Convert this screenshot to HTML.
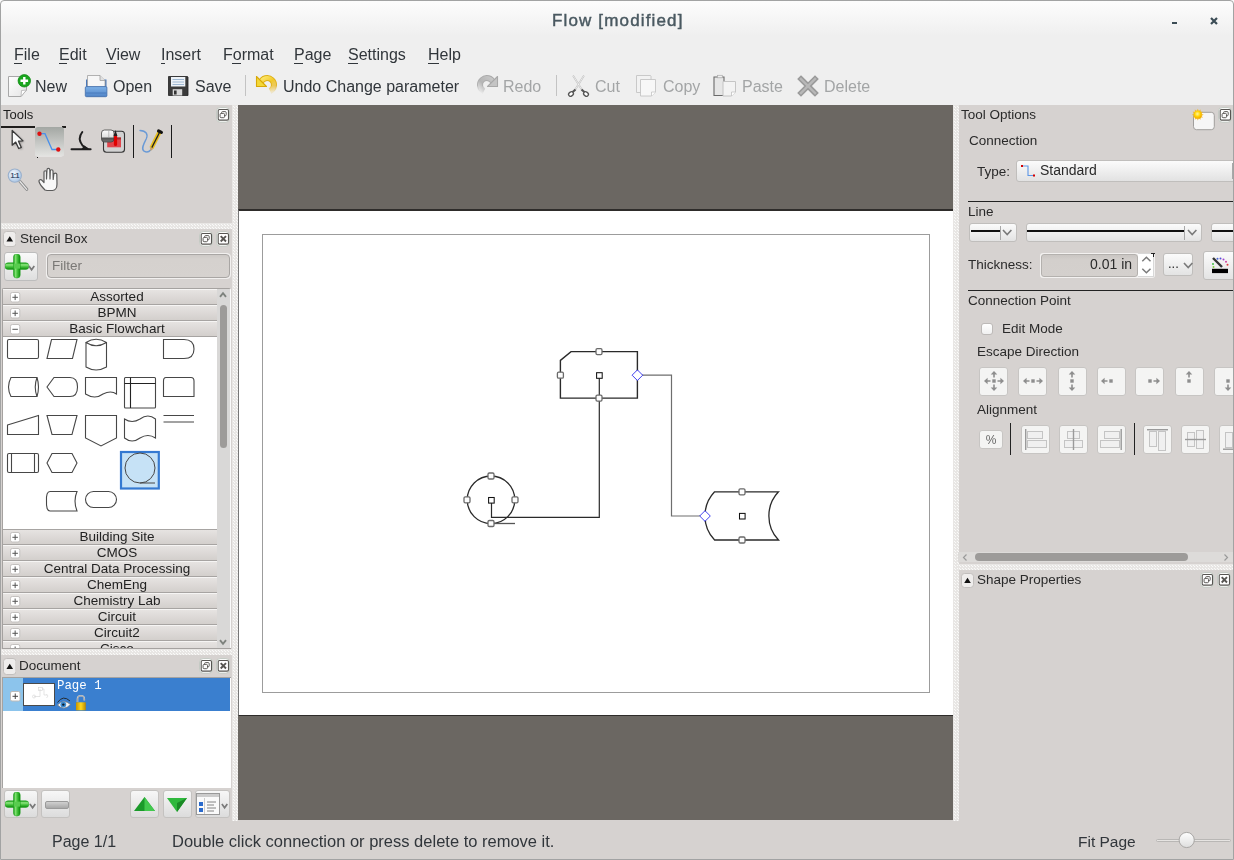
<!DOCTYPE html>
<html><head><meta charset="utf-8"><style>
html,body{margin:0;padding:0;}
body{width:1234px;height:860px;overflow:hidden;position:relative;background:#efefef;font-family:"Liberation Sans",sans-serif;}
body>div,body>svg{position:absolute;}
.t{white-space:pre;line-height:1;will-change:transform;}
</style></head><body>
<div style="left:0px;top:0px;width:1234px;height:40px;background:linear-gradient(#fdfdfd 0px,#f6f6f6 18px,#efefef 36px);"></div>
<div class="t" style="left:551.5px;top:12.00px;font-size:17px;color:#4a5961;letter-spacing:1.15px;-webkit-text-stroke:0.45px #4a5961;">Flow [modified]</div>
<div style="left:1172px;top:22px;width:5px;height:2px;background:#3b4c55;"></div>
<svg style="left:1210px;top:17px" width="8" height="8"><path d="M1 1L7 7M7 1L1 7" stroke="#3b4c55" stroke-width="2.2"/></svg>
<div class="t" style="left:14px;top:47.00px;font-size:16px;color:#31363b;">File</div>
<div style="left:14px;top:63px;width:8px;height:1px;background:#31363b;"></div>
<div class="t" style="left:58.5px;top:47.00px;font-size:16px;color:#31363b;">Edit</div>
<div style="left:58.5px;top:63px;width:8px;height:1px;background:#31363b;"></div>
<div class="t" style="left:105.5px;top:47.00px;font-size:16px;color:#31363b;">View</div>
<div style="left:105.5px;top:63px;width:10px;height:1px;background:#31363b;"></div>
<div class="t" style="left:161px;top:47.00px;font-size:16px;color:#31363b;">Insert</div>
<div style="left:161px;top:63px;width:4px;height:1px;background:#31363b;"></div>
<div class="t" style="left:222.5px;top:47.00px;font-size:16px;color:#31363b;">Format</div>
<div style="left:231.5px;top:63px;width:9px;height:1px;background:#31363b;"></div>
<div class="t" style="left:293.5px;top:47.00px;font-size:16px;color:#31363b;">Page</div>
<div style="left:293.5px;top:63px;width:9px;height:1px;background:#31363b;"></div>
<div class="t" style="left:347.5px;top:47.00px;font-size:16px;color:#31363b;">Settings</div>
<div style="left:347.5px;top:63px;width:10px;height:1px;background:#31363b;"></div>
<div class="t" style="left:427.5px;top:47.00px;font-size:16px;color:#31363b;">Help</div>
<div style="left:427.5px;top:63px;width:11px;height:1px;background:#31363b;"></div>
<div class="t" style="left:35px;top:79.00px;font-size:16px;color:#31363b;">New</div>
<div class="t" style="left:112.5px;top:79.00px;font-size:16px;color:#31363b;">Open</div>
<div class="t" style="left:194.5px;top:79.00px;font-size:16px;color:#31363b;">Save</div>
<div class="t" style="left:283px;top:79.00px;font-size:16px;color:#31363b;">Undo Change parameter</div>
<div class="t" style="left:503px;top:79.00px;font-size:16px;color:#a3a5a6;">Redo</div>
<div class="t" style="left:594.5px;top:79.00px;font-size:16px;color:#a3a5a6;">Cut</div>
<div class="t" style="left:662.5px;top:79.00px;font-size:16px;color:#a3a5a6;">Copy</div>
<div class="t" style="left:741.5px;top:79.00px;font-size:16px;color:#a3a5a6;">Paste</div>
<div class="t" style="left:824px;top:79.00px;font-size:16px;color:#a3a5a6;">Delete</div>
<div style="left:245px;top:75px;width:1px;height:21px;background:#c3c3c3;"></div>
<div style="left:556px;top:75px;width:1px;height:21px;background:#c3c3c3;"></div>
<div style="left:1px;top:105px;width:231px;height:715px;background:#d6d2d0;"></div>
<div style="left:232px;top:105px;width:6px;height:716px;background:#ebe9e7;"></div>
<div style="left:953px;top:105px;width:5px;height:716px;background:#ebe9e7;"></div>
<div style="left:958px;top:105px;width:275px;height:715px;background:#d6d2d0;"></div>
<div style="left:238px;top:105px;width:715px;height:715px;background:#6b6762;"></div>
<div style="left:238px;top:209px;width:715px;height:507px;background:#fff;border-top:2px solid #2e2c2a;border-bottom:1px solid #2e2c2a;border-left:1px solid #777;box-sizing:border-box;"></div>
<div style="left:262px;top:234px;width:668px;height:459px;border:1px solid #9c9c9c;box-sizing:border-box;"></div>
<div style="left:1px;top:820px;width:1232px;height:39px;background:#d6d2d0;"></div>
<div class="t" style="left:52px;top:834.00px;font-size:16px;color:#31363b;">Page 1/1</div>
<div class="t" style="left:172px;top:833.00px;font-size:16.5px;color:#31363b;">Double click connection or press delete to remove it.</div>
<div class="t" style="left:1078px;top:834.00px;font-size:15.5px;color:#31363b;">Fit Page</div>
<div class="t" style="left:3px;top:108.00px;font-size:13px;color:#1e1e1e;">Tools</div>
<svg style="left:216px;top:107px" width="15" height="16" viewBox="0 0 15 16"><rect x="0.6" y="0.6" width="12.8" height="14.6" rx="3.5" fill="#ffffff" stroke="#bcc4bc" stroke-width="0.9"/><rect x="2.2" y="2.5" width="10.3" height="10.6" rx="1.3" fill="none" stroke="#575552" stroke-width="1.1"/><rect x="5.6" y="4.6" width="4.6" height="4.2" rx="1" fill="none" stroke="#575552" stroke-width="0.95"/><rect x="4.1" y="6.4" width="4.4" height="4.3" rx="1" fill="#fafafa" stroke="#575552" stroke-width="0.95"/></svg>
<div style="left:1px;top:126px;width:34px;height:1.6px;background:#1f1d1c;"></div>
<div style="left:62px;top:126px;width:4px;height:1.6px;background:#1f1d1c;"></div>
<div style="left:34.5px;top:126.5px;width:29px;height:29.5px;border-radius:3px;background:linear-gradient(#a3a7a3,#e3e3e1);box-shadow:0 0.5px 0 #f2f2f2;"></div>
<div style="left:37px;top:157px;width:1.3px;height:1.3px;background:#111;"></div>
<svg style="left:8px;top:127px" width="20" height="26"><defs><filter id="blr" x="-50%" y="-50%" width="200%" height="200%"><feGaussianBlur stdDeviation="1"/></filter></defs><path d="M5.5 4.5L5.5 19.2L9 16.1L12 22.5L14.6 21.4L11.8 15.2L16.3 14.9Z" fill="#000" opacity="0.35" filter="url(#blr)"/><path d="M4.2 3.5L4.2 18.2L7.7 15.1L10.7 21.5L13.3 20.4L10.5 14.2L15 13.9Z" fill="#fafafa" stroke="#3a3a3a" stroke-width="1.3" stroke-linejoin="round"/></svg>
<svg style="left:35px;top:128px" width="28" height="26"><path d="M4.5 5.7L10 5.7L17 21.5L23.3 21.5" fill="none" stroke="#4a90ea" stroke-width="1.3"/><circle cx="4.5" cy="5.7" r="2.2" fill="#e01010"/><circle cx="23.3" cy="21.5" r="2.2" fill="#e01010"/></svg>
<svg style="left:66px;top:124px" width="30" height="30" viewBox="66 124 30 30"><path d="M82.3 132C79.5 135.5 78.6 140.5 82.5 145.5L87 148.5" fill="none" stroke="#1e1e1e" stroke-width="2" stroke-linecap="round"/><path d="M71.5 149.2L90.6 149.2" stroke="#1e1e1e" stroke-width="2" stroke-linecap="round"/><path d="M81 150L84 145.5L91 150Z" fill="#1e1e1e"/></svg>
<svg style="left:98px;top:126px" width="30" height="30" viewBox="98 126 30 30"><defs><linearGradient id="cyl" x1="0" y1="0" x2="0" y2="1"><stop offset="0" stop-color="#fdfdfd"/><stop offset="0.55" stop-color="#e2e2e2"/><stop offset="0.7" stop-color="#555"/><stop offset="1" stop-color="#777"/></linearGradient></defs><rect x="103.5" y="131.2" width="21" height="21" rx="3" fill="#d2d2d2" stroke="#333" stroke-width="1.1"/><rect x="107.2" y="137.5" width="13.8" height="9.8" fill="#e0454c"/><path d="M107.2 137.5L121 137.5L121 139.5L107.2 139.5Z" fill="#a03030"/><rect x="101.5" y="130" width="12.5" height="12" rx="3" fill="url(#cyl)" stroke="#444" stroke-width="0.8"/><path d="M108.8 130.5L108.8 137" stroke="#999" stroke-width="0.6"/><path d="M115.5 135L115.5 144.5" stroke="#e00000" stroke-width="3.2" stroke-linecap="round"/><path d="M113.6 136L115.5 130L117.4 136Z" fill="#222"/></svg>
<div style="left:133px;top:125px;width:1.2px;height:32.5px;background:#1a1a1a;"></div>
<svg style="left:136px;top:124px" width="32" height="32" viewBox="136 124 32 32"><path d="M140 130.5C146 130.8 148.5 134 146.2 139C143.6 144 140.8 149 144 151.2C146.5 152.6 149 152 150.6 150" fill="none" stroke="#6a9ad6" stroke-width="1.35" stroke-linecap="round"/><path d="M151.5 148L159.7 131.8" stroke="#e8c020" stroke-width="4.4"/><path d="M151.8 147.6L159.6 132.2" stroke="#222" stroke-width="1.3"/><path d="M158.6 131L161.4 132.4" stroke="#111" stroke-width="3.2" stroke-linecap="round"/><path d="M149.8 147L153.4 148.8L150.6 151Z" fill="#c8a060"/></svg>
<div style="left:171px;top:125px;width:1.2px;height:32.5px;background:#1a1a1a;"></div>
<svg style="left:0px;top:160px" width="64" height="36" viewBox="0 160 64 36"><defs><radialGradient id="lens" cx="0.4" cy="0.35" r="0.7"><stop offset="0" stop-color="#f4f8fc"/><stop offset="1" stop-color="#a8c4e4"/></radialGradient></defs><path d="M20 181.5L26.8 189.3" stroke="#8a8a8a" stroke-width="3" stroke-linecap="round"/><path d="M20 181.5L26.8 189.3" stroke="#e8e8e8" stroke-width="1.2" stroke-linecap="round"/><circle cx="14.8" cy="175.6" r="6.6" fill="url(#lens)" stroke="#9ab0cc" stroke-width="1.1"/><text x="14.6" y="178.3" font-size="7.2" font-weight="bold" text-anchor="middle" fill="#3a4e6e" font-family="Liberation Sans" letter-spacing="-0.7">1:1</text><path d="M45 190C42 187 39.5 183.5 39 181.5C38.6 179.8 40.6 179 42 180.3L44 182.5L44 172C44 170.3 46.5 170.3 46.5 172L46.5 179L47 169.8C47 168 49.8 168 49.8 169.8L50 179L50.3 171C50.3 169.3 53 169.3 53 171L53.2 179.5L53.8 174.3C53.8 172.8 56.8 172.8 56.8 174.3L57 184C57 188 55 190.5 52.5 190.5L47 190.5Z" fill="#f8f8f8" stroke="#5a5a5a" stroke-width="1.2" stroke-linejoin="round"/></svg>
<div style="left:1px;top:223px;width:231px;height:6px;background-color:#e8e6e4;background-image:radial-gradient(circle,#fafaf9 0.7px,transparent 0.75px),radial-gradient(circle,#fafaf9 0.7px,transparent 0.75px);background-size:3px 3px;background-position:0 0,1px 1px;"></div>
<svg style="left:2.5px;top:230.5px" width="13.5" height="16"><rect x="0.5" y="0.5" width="12.5" height="15" rx="3" fill="#efedec" stroke="#c2bfbd"/><path d="M3.45 10.5L6.75 5.2L10.05 10.5Z" fill="#111"/></svg>
<div class="t" style="left:19.5px;top:232.00px;font-size:13.5px;color:#2a2a2a;">Stencil Box</div>
<svg style="left:199px;top:231px" width="15" height="16" viewBox="0 0 15 16"><rect x="0.6" y="0.6" width="12.8" height="14.6" rx="3.5" fill="#ffffff" stroke="#bcc4bc" stroke-width="0.9"/><rect x="2.2" y="2.5" width="10.3" height="10.6" rx="1.3" fill="none" stroke="#575552" stroke-width="1.1"/><rect x="5.6" y="4.6" width="4.6" height="4.2" rx="1" fill="none" stroke="#575552" stroke-width="0.95"/><rect x="4.1" y="6.4" width="4.4" height="4.3" rx="1" fill="#fafafa" stroke="#575552" stroke-width="0.95"/></svg>
<svg style="left:216px;top:231px" width="15" height="16" viewBox="0 0 15 16"><rect x="0.6" y="0.6" width="12.8" height="14.6" rx="3.5" fill="#ffffff" stroke="#bcc4bc" stroke-width="0.9"/><rect x="2.2" y="2.5" width="10.3" height="10.6" rx="1.3" fill="none" stroke="#575552" stroke-width="1.1"/><path d="M4.7 5.1L10 10.5M10 5.1L4.7 10.5" stroke="#575552" stroke-width="1.9"/></svg>
<div style="left:3.6px;top:251.5px;width:34.6px;height:29.2px;box-sizing:border-box;border:1px solid #bdbdbd;border-radius:3px;background:linear-gradient(#fafafa,#dedede);"></div>
<svg style="left:5px;top:254px" width="25" height="25" viewBox="0 0 25 25"><defs><linearGradient id="gv1" x1="0" y1="0" x2="1" y2="0"><stop offset="0" stop-color="#109a10"/><stop offset="0.3" stop-color="#7fe070"/><stop offset="0.6" stop-color="#40bf38"/><stop offset="1" stop-color="#0a8a0a"/></linearGradient><linearGradient id="gh1" x1="0" y1="0" x2="0" y2="1"><stop offset="0" stop-color="#109a10"/><stop offset="0.3" stop-color="#8fe680"/><stop offset="0.6" stop-color="#46c23e"/><stop offset="1" stop-color="#0a8a0a"/></linearGradient></defs><rect x="0" y="8.8" width="23.8" height="6.6" rx="3" fill="url(#gh1)" stroke="#1e9e1e" stroke-width="0.5"/><rect x="8.5" y="0" width="6.7" height="24" rx="3" fill="url(#gv1)" stroke="#1e9e1e" stroke-width="0.5"/><rect x="8.7" y="9.6" width="6.3" height="5" fill="#58cc4e"/></svg>
<svg style="left:28.2px;top:265px" width="9" height="8"><path d="M0.9 1L3.6 4.8L6.3 1" fill="none" stroke="#7a7a7a" stroke-width="1.7"/></svg>
<div style="left:46px;top:253px;width:184.5px;height:25.5px;box-sizing:border-box;border:1px solid #f2f0ef;border-radius:4px;background:#f2f0ef;"></div>
<div style="left:47px;top:254px;width:183px;height:23.5px;box-sizing:border-box;border:1px solid #a9a6a4;border-radius:4px;background:linear-gradient(#cdc9c6,#d5d1ce 4px,#d6d2cf);"></div>
<div class="t" style="left:51.5px;top:259.00px;font-size:13.5px;color:#7a7876;">Filter</div>
<div style="left:2px;top:288px;width:229px;height:361px;box-sizing:border-box;border:1px solid #a5a2a0;border-right-color:#fbfbfb;border-radius:2px 2px 0 0;background:#fff;"></div>
<div style="left:217px;top:289px;width:13px;height:359px;background:#d9d8d7;"></div>
<svg style="left:217px;top:291px" width="12" height="8"><path d="M3 5.8L6 2.2L9 5.8" fill="none" stroke="#7d827d" stroke-width="1.9"/></svg>
<svg style="left:217px;top:638px" width="12" height="8"><path d="M3 2.2L6 5.8L9 2.2" fill="none" stroke="#7d827d" stroke-width="1.9"/></svg>
<div style="left:219.5px;top:304.5px;width:7.5px;height:143px;border-radius:4px;background:#9d9b99;"></div>
<div style="left:3px;top:289px;width:214px;height:16px;box-sizing:border-box;border-top:1px solid #f6f5f4;border-bottom:1px solid #a7a4a2;background:linear-gradient(#e6e3e1,#d3cfcc);"></div>
<svg style="left:9.5px;top:292.2px" width="11" height="11"><rect x="0.5" y="0.5" width="9.3" height="9.5" rx="1.8" fill="#fff" stroke="#c4c1bf"/><path d="M2.4 5.3L7.9 5.3M5.15 2.5L5.15 8.1" stroke="#555" stroke-width="1"/></svg>
<div class="t" style="left:3.5px;top:290.00px;font-size:13.5px;color:#222;width:226px;text-align:center;">Assorted</div>
<div style="left:3px;top:305px;width:214px;height:16px;box-sizing:border-box;border-top:1px solid #f6f5f4;border-bottom:1px solid #a7a4a2;background:linear-gradient(#e6e3e1,#d3cfcc);"></div>
<svg style="left:9.5px;top:308.2px" width="11" height="11"><rect x="0.5" y="0.5" width="9.3" height="9.5" rx="1.8" fill="#fff" stroke="#c4c1bf"/><path d="M2.4 5.3L7.9 5.3M5.15 2.5L5.15 8.1" stroke="#555" stroke-width="1"/></svg>
<div class="t" style="left:3.5px;top:306.00px;font-size:13.5px;color:#222;width:226px;text-align:center;">BPMN</div>
<div style="left:3px;top:321px;width:214px;height:16px;box-sizing:border-box;border-top:1px solid #f6f5f4;border-bottom:1px solid #a7a4a2;background:linear-gradient(#e6e3e1,#d3cfcc);"></div>
<svg style="left:9.5px;top:324.2px" width="11" height="11"><rect x="0.5" y="0.5" width="9.3" height="9.5" rx="1.8" fill="#fff" stroke="#c4c1bf"/><path d="M2.4 5.3L7.9 5.3" stroke="#555" stroke-width="1"/></svg>
<div class="t" style="left:3.5px;top:322.00px;font-size:13.5px;color:#222;width:226px;text-align:center;">Basic Flowchart</div>
<div style="left:3px;top:529px;width:214px;height:16px;box-sizing:border-box;border-top:1px solid #f6f5f4;border-bottom:1px solid #a7a4a2;background:linear-gradient(#e6e3e1,#d3cfcc);"></div>
<svg style="left:9.5px;top:532.2px" width="11" height="11"><rect x="0.5" y="0.5" width="9.3" height="9.5" rx="1.8" fill="#fff" stroke="#c4c1bf"/><path d="M2.4 5.3L7.9 5.3M5.15 2.5L5.15 8.1" stroke="#555" stroke-width="1"/></svg>
<div class="t" style="left:3.5px;top:530.00px;font-size:13.5px;color:#222;width:226px;text-align:center;">Building Site</div>
<div style="left:3px;top:545px;width:214px;height:16px;box-sizing:border-box;border-top:1px solid #f6f5f4;border-bottom:1px solid #a7a4a2;background:linear-gradient(#e6e3e1,#d3cfcc);"></div>
<svg style="left:9.5px;top:548.2px" width="11" height="11"><rect x="0.5" y="0.5" width="9.3" height="9.5" rx="1.8" fill="#fff" stroke="#c4c1bf"/><path d="M2.4 5.3L7.9 5.3M5.15 2.5L5.15 8.1" stroke="#555" stroke-width="1"/></svg>
<div class="t" style="left:3.5px;top:546.00px;font-size:13.5px;color:#222;width:226px;text-align:center;">CMOS</div>
<div style="left:3px;top:561px;width:214px;height:16px;box-sizing:border-box;border-top:1px solid #f6f5f4;border-bottom:1px solid #a7a4a2;background:linear-gradient(#e6e3e1,#d3cfcc);"></div>
<svg style="left:9.5px;top:564.2px" width="11" height="11"><rect x="0.5" y="0.5" width="9.3" height="9.5" rx="1.8" fill="#fff" stroke="#c4c1bf"/><path d="M2.4 5.3L7.9 5.3M5.15 2.5L5.15 8.1" stroke="#555" stroke-width="1"/></svg>
<div class="t" style="left:3.5px;top:562.00px;font-size:13.5px;color:#222;width:226px;text-align:center;">Central Data Processing</div>
<div style="left:3px;top:577px;width:214px;height:16px;box-sizing:border-box;border-top:1px solid #f6f5f4;border-bottom:1px solid #a7a4a2;background:linear-gradient(#e6e3e1,#d3cfcc);"></div>
<svg style="left:9.5px;top:580.2px" width="11" height="11"><rect x="0.5" y="0.5" width="9.3" height="9.5" rx="1.8" fill="#fff" stroke="#c4c1bf"/><path d="M2.4 5.3L7.9 5.3M5.15 2.5L5.15 8.1" stroke="#555" stroke-width="1"/></svg>
<div class="t" style="left:3.5px;top:578.00px;font-size:13.5px;color:#222;width:226px;text-align:center;">ChemEng</div>
<div style="left:3px;top:593px;width:214px;height:16px;box-sizing:border-box;border-top:1px solid #f6f5f4;border-bottom:1px solid #a7a4a2;background:linear-gradient(#e6e3e1,#d3cfcc);"></div>
<svg style="left:9.5px;top:596.2px" width="11" height="11"><rect x="0.5" y="0.5" width="9.3" height="9.5" rx="1.8" fill="#fff" stroke="#c4c1bf"/><path d="M2.4 5.3L7.9 5.3M5.15 2.5L5.15 8.1" stroke="#555" stroke-width="1"/></svg>
<div class="t" style="left:3.5px;top:594.00px;font-size:13.5px;color:#222;width:226px;text-align:center;">Chemistry Lab</div>
<div style="left:3px;top:609px;width:214px;height:16px;box-sizing:border-box;border-top:1px solid #f6f5f4;border-bottom:1px solid #a7a4a2;background:linear-gradient(#e6e3e1,#d3cfcc);"></div>
<svg style="left:9.5px;top:612.2px" width="11" height="11"><rect x="0.5" y="0.5" width="9.3" height="9.5" rx="1.8" fill="#fff" stroke="#c4c1bf"/><path d="M2.4 5.3L7.9 5.3M5.15 2.5L5.15 8.1" stroke="#555" stroke-width="1"/></svg>
<div class="t" style="left:3.5px;top:610.00px;font-size:13.5px;color:#222;width:226px;text-align:center;">Circuit</div>
<div style="left:3px;top:625px;width:214px;height:16px;box-sizing:border-box;border-top:1px solid #f6f5f4;border-bottom:1px solid #a7a4a2;background:linear-gradient(#e6e3e1,#d3cfcc);"></div>
<svg style="left:9.5px;top:628.2px" width="11" height="11"><rect x="0.5" y="0.5" width="9.3" height="9.5" rx="1.8" fill="#fff" stroke="#c4c1bf"/><path d="M2.4 5.3L7.9 5.3M5.15 2.5L5.15 8.1" stroke="#555" stroke-width="1"/></svg>
<div class="t" style="left:3.5px;top:626.00px;font-size:13.5px;color:#222;width:226px;text-align:center;">Circuit2</div>
<div style="left:3px;top:641px;width:214px;height:16px;box-sizing:border-box;border-top:1px solid #f6f5f4;border-bottom:1px solid #a7a4a2;background:linear-gradient(#e6e3e1,#d3cfcc);"></div>
<svg style="left:9.5px;top:644.2px" width="11" height="11"><rect x="0.5" y="0.5" width="9.3" height="9.5" rx="1.8" fill="#fff" stroke="#c4c1bf"/><path d="M2.4 5.3L7.9 5.3M5.15 2.5L5.15 8.1" stroke="#555" stroke-width="1"/></svg>
<div class="t" style="left:3.5px;top:642.00px;font-size:13.5px;color:#222;width:226px;text-align:center;">Cisco</div>
<div style="left:3px;top:529px;width:214px;height:1px;background:#a7a4a2;"></div>
<div style="left:1px;top:649px;width:232px;height:40px;background:#d6d2d0;"></div>
<div style="left:2px;top:648px;width:229px;height:1px;background:#a5a2a0;"></div>
<svg style="left:3px;top:337px" width="214" height="192" viewBox="3 337 214 192"><g fill="none" stroke="#474747" stroke-width="1.1"><rect x="7.5" y="339.5" width="31" height="19" rx="1.5"/><path d="M51.5 339.5L77 339.5L72.5 358.5L47 358.5Z"/><path d="M86 342.5L86 367Q96 373 106.5 367L106.5 342.5Q96 336 86 342.5Q96 349 106.5 342.5"/><path d="M163.5 339.5L184 339.5Q194 339.5 194 349Q194 358.5 184 358.5L163.5 358.5Z"/><path d="M11 377.5L37 377.5Q40 387 37 396.5L11 396.5Q6 387 11 377.5Z"/><path d="M37 377.5Q33.5 387 37 396.5"/><path d="M54 377.5L70 377.5Q77.5 377.5 77.5 387Q77.5 396.5 70 396.5L54 396.5L47 387Z"/><path d="M85.5 377.5L116.5 377.5L116.5 394Q111 390 103 394Q95 400 85.5 394Z"/><rect x="124.5" y="377.5" width="31" height="30.5" rx="1"/><path d="M124.5 383.5L155.5 383.5M130.5 377.5L130.5 408" stroke="#222"/><path d="M166 377.5L191 377.5Q194 377.5 194 381L194 396.5L163.5 396.5L163.5 381Q163.5 377.5 166 377.5Z"/><path d="M7.5 425L38.5 415.5L38.5 434.5L7.5 434.5Z"/><path d="M47 415.5L77 415.5L72 434.5L52 434.5Z"/><path d="M85.5 415.5L116.5 415.5L116.5 438L101 446L85.5 438Z"/><path d="M124.5 419Q132 424 140 419Q148 413 155.5 419L155.5 438Q148 433 140 438Q132 444 124.5 438Z"/><path d="M163.5 415.5L194 415.5M163.5 422L194 422"/><rect x="7.5" y="453.5" width="31" height="19" rx="1.5"/><path d="M11.5 453.5L11.5 472.5M34.5 453.5L34.5 472.5"/><path d="M52 453.5L72 453.5L77 463L72 472.5L52 472.5L47 463Z"/><path d="M50 491.5L77 491.5Q73 501 77 511L50 511Q46 511 46.5 501Q46 491.5 50 491.5Z"/><rect x="85.5" y="491.5" width="31" height="16" rx="8"/></g><rect x="121" y="452" width="37.8" height="36.5" fill="#c6e2f6" stroke="#3479d1" stroke-width="2.2"/><circle cx="140" cy="468" r="15" fill="none" stroke="#474747" stroke-width="1"/><path d="M140 483L155 483" stroke="#474747" stroke-width="1"/></svg>
<div style="left:1px;top:649px;width:231px;height:6px;background-color:#e8e6e4;background-image:radial-gradient(circle,#fafaf9 0.7px,transparent 0.75px),radial-gradient(circle,#fafaf9 0.7px,transparent 0.75px);background-size:3px 3px;background-position:0 0,1px 1px;"></div>
<svg style="left:2.5px;top:657.5px" width="13.5" height="17"><rect x="0.5" y="0.5" width="12.5" height="16" rx="3" fill="#efedec" stroke="#c2bfbd"/><path d="M3.45 11.0L6.75 5.7L10.05 11.0Z" fill="#111"/></svg>
<div class="t" style="left:19.3px;top:659.00px;font-size:13.5px;color:#2a2a2a;">Document</div>
<svg style="left:199px;top:658px" width="15" height="16" viewBox="0 0 15 16"><rect x="0.6" y="0.6" width="12.8" height="14.6" rx="3.5" fill="#ffffff" stroke="#bcc4bc" stroke-width="0.9"/><rect x="2.2" y="2.5" width="10.3" height="10.6" rx="1.3" fill="none" stroke="#575552" stroke-width="1.1"/><rect x="5.6" y="4.6" width="4.6" height="4.2" rx="1" fill="none" stroke="#575552" stroke-width="0.95"/><rect x="4.1" y="6.4" width="4.4" height="4.3" rx="1" fill="#fafafa" stroke="#575552" stroke-width="0.95"/></svg>
<svg style="left:216px;top:658px" width="15" height="16" viewBox="0 0 15 16"><rect x="0.6" y="0.6" width="12.8" height="14.6" rx="3.5" fill="#ffffff" stroke="#bcc4bc" stroke-width="0.9"/><rect x="2.2" y="2.5" width="10.3" height="10.6" rx="1.3" fill="none" stroke="#575552" stroke-width="1.1"/><path d="M4.7 5.1L10 10.5M10 5.1L4.7 10.5" stroke="#575552" stroke-width="1.9"/></svg>
<div style="left:2px;top:677px;width:229px;height:111px;background:#fff;border-left:1px solid #a5a3a1;border-top:1px solid #a5a3a1;box-sizing:border-box;"></div>
<div style="left:2.7px;top:677.6px;width:20px;height:33px;background:#8cc4ec;"></div>
<div style="left:22.7px;top:677.6px;width:207.5px;height:33px;background:#3a7fcf;"></div>
<svg style="left:10px;top:691px" width="11" height="11"><rect x="0.5" y="0.5" width="9.5" height="9.5" rx="1.5" fill="#fff" stroke="#bdbab8"/><path d="M2.5 5.3L8 5.3M5.25 2.5L5.25 8" stroke="#444" stroke-width="1"/></svg>
<div style="left:23.4px;top:683px;width:32px;height:23px;box-sizing:border-box;background:#fff;border:1px solid #4a4a4a;"></div>
<svg style="left:24px;top:684px" width="30" height="21"><path d="M10 12.5L16 12.5L16 5M18 5L20 5L20 11L23 11" fill="none" stroke="#d4d4d4" stroke-width="0.6"/><rect x="14.5" y="3.5" width="4" height="3" fill="none" stroke="#d4d4d4" stroke-width="0.6"/><circle cx="10" cy="12.5" r="1.5" fill="none" stroke="#d4d4d4" stroke-width="0.6"/><path d="M22.5 10Q25.5 12 22.5 14" fill="none" stroke="#d4d4d4" stroke-width="0.6"/></svg>
<div class="t" style="left:57.4px;top:680.00px;font-size:12.4px;color:#fff;font-family:'Liberation Mono',monospace;">Page 1</div>
<svg style="left:56px;top:695px" width="17" height="16" viewBox="56 695 17 16"><path d="M57.5 702.5Q63 694.5 70 701" fill="none" stroke="#222" stroke-width="0.9"/><path d="M57.5 705Q63.5 698.5 70.5 704.5Q64 711.5 57.5 705Z" fill="#f4f6f8" stroke="#777" stroke-width="0.7"/><circle cx="63.3" cy="704.6" r="2.9" fill="#3a8ad0"/><circle cx="63.3" cy="704.6" r="1.2" fill="#0a1a2a"/></svg>
<svg style="left:74px;top:694px" width="14" height="17" viewBox="74 694 14 17"><defs><linearGradient id="gold" x1="0" y1="0" x2="1" y2="0"><stop offset="0" stop-color="#c89400"/><stop offset="0.5" stop-color="#ffd820"/><stop offset="1" stop-color="#b88800"/></linearGradient></defs><path d="M77.5 702L77.5 699Q77.5 695.8 80.9 695.8Q84.3 695.8 84.3 699L84.3 700.5" fill="none" stroke="#d8d8d8" stroke-width="1.6"/><path d="M77.5 702L77.5 699Q77.5 695.8 80.9 695.8Q84.3 695.8 84.3 699L84.3 700.5" fill="none" stroke="#777" stroke-width="0.5"/><rect x="76" y="702.3" width="9.8" height="8" fill="url(#gold)"/></svg>
<div style="left:3.9px;top:789.8px;width:34.4px;height:28.6px;box-sizing:border-box;border:1px solid #c4c2c0;border-radius:3px;background:linear-gradient(#f7f7f7,#dcdcdc);"></div>
<svg style="left:5px;top:792px" width="25" height="25" viewBox="0 0 25 25"><defs><linearGradient id="gv2" x1="0" y1="0" x2="1" y2="0"><stop offset="0" stop-color="#109a10"/><stop offset="0.3" stop-color="#7fe070"/><stop offset="0.6" stop-color="#40bf38"/><stop offset="1" stop-color="#0a8a0a"/></linearGradient><linearGradient id="gh2" x1="0" y1="0" x2="0" y2="1"><stop offset="0" stop-color="#109a10"/><stop offset="0.3" stop-color="#8fe680"/><stop offset="0.6" stop-color="#46c23e"/><stop offset="1" stop-color="#0a8a0a"/></linearGradient></defs><rect x="0" y="8.8" width="23.8" height="6.6" rx="3" fill="url(#gh2)" stroke="#1e9e1e" stroke-width="0.5"/><rect x="8.5" y="0" width="6.7" height="24" rx="3" fill="url(#gv2)" stroke="#1e9e1e" stroke-width="0.5"/><rect x="8.7" y="9.6" width="6.3" height="5" fill="#58cc4e"/></svg>
<svg style="left:28.5px;top:803px" width="9" height="8"><path d="M0.9 1L3.6 4.8L6.3 1" fill="none" stroke="#7a7a7a" stroke-width="1.7"/></svg>
<div style="left:41.4px;top:789.8px;width:29px;height:28.6px;box-sizing:border-box;border:1px solid #c4c2c0;border-radius:3px;background:linear-gradient(#f7f7f7,#dcdcdc);"></div>
<div style="left:45px;top:801px;width:21.5px;height:6px;border-radius:2px;background:linear-gradient(#d0d0d0,#a8a8a8);border:0.5px solid #9a9a9a;"></div>
<div style="left:130.4px;top:789.8px;width:29px;height:28.6px;box-sizing:border-box;border:1px solid #c4c2c0;border-radius:3px;background:linear-gradient(#f7f7f7,#dcdcdc);"></div>
<svg style="left:133px;top:795px" width="23" height="18"><path d="M1 16L11.5 2L22 16Z" fill="#1a9a2a"/><path d="M11.5 2L22 16L11.5 16Z" fill="#42c94e"/></svg>
<div style="left:162.5px;top:789.8px;width:29px;height:28.6px;box-sizing:border-box;border:1px solid #c4c2c0;border-radius:3px;background:linear-gradient(#f7f7f7,#dcdcdc);"></div>
<svg style="left:166px;top:797px" width="22" height="17"><path d="M1 1L21 1L11 15Z" fill="#2fb83d"/><path d="M11 15L21 1L11 6Z" fill="#1a8a26"/></svg>
<div style="left:194.5px;top:789.8px;width:35px;height:28.6px;box-sizing:border-box;border:1px solid #c4c2c0;border-radius:3px;background:linear-gradient(#f7f7f7,#dcdcdc);"></div>
<svg style="left:196px;top:793px" width="25" height="23"><rect x="0.5" y="0.5" width="23" height="21" fill="#fafafa" stroke="#999"/><rect x="1" y="1" width="22" height="3" fill="#ccc"/><rect x="3" y="9" width="4" height="4" fill="#2a6acc"/><rect x="3" y="15" width="4" height="4" fill="#2a6acc"/><path d="M11 9L20 9M11 12L18 12M11 15L20 15M11 18L18 18" stroke="#777" stroke-width="0.9"/><path d="M8.5 5L8.5 21" stroke="#ccc"/></svg>
<svg style="left:221px;top:803px" width="9" height="8"><path d="M0.9 1L3.6 4.8L6.3 1" fill="none" stroke="#7a7a7a" stroke-width="1.7"/></svg>
<div style="left:232px;top:105px;width:6px;height:716px;background-color:#e8e6e4;background-image:radial-gradient(circle,#fafaf9 0.7px,transparent 0.75px),radial-gradient(circle,#fafaf9 0.7px,transparent 0.75px);background-size:3px 3px;background-position:0 0,1px 1px;"></div>
<div style="left:953px;top:105px;width:5.5px;height:716px;background-color:#e8e6e4;background-image:radial-gradient(circle,#fafaf9 0.7px,transparent 0.75px),radial-gradient(circle,#fafaf9 0.7px,transparent 0.75px);background-size:3px 3px;background-position:0 0,1px 1px;"></div>
<div class="t" style="left:961.4px;top:108.00px;font-size:13.5px;color:#2a2a2a;">Tool Options</div>
<svg style="left:1191px;top:108px" width="24" height="23"><defs><radialGradient id="sun" cx="0.45" cy="0.4" r="0.6"><stop offset="0" stop-color="#fff6a0"/><stop offset="0.6" stop-color="#ffd200"/><stop offset="1" stop-color="#f0a800"/></radialGradient></defs><rect x="2.5" y="4.3" width="20.8" height="17.4" rx="3" fill="#f6f6f6" stroke="#a09e9c" stroke-width="1"/><polygon points="12.70,6.70 10.66,7.74 11.91,9.65 9.63,9.53 9.75,11.81 7.84,10.56 6.80,12.60 5.76,10.56 3.85,11.81 3.97,9.53 1.69,9.65 2.94,7.74 0.90,6.70 2.94,5.66 1.69,3.75 3.97,3.87 3.85,1.59 5.76,2.84 6.80,0.80 7.84,2.84 9.75,1.59 9.63,3.87 11.91,3.75 10.66,5.66" fill="#f5b820" opacity="0.85"/><circle cx="6.8" cy="6.7" r="3.9" fill="url(#sun)"/></svg>
<svg style="left:1217.5px;top:107px" width="15" height="16" viewBox="0 0 15 16"><rect x="0.6" y="0.6" width="12.8" height="14.6" rx="3.5" fill="#ffffff" stroke="#bcc4bc" stroke-width="0.9"/><rect x="2.2" y="2.5" width="10.3" height="10.6" rx="1.3" fill="none" stroke="#575552" stroke-width="1.1"/><rect x="5.6" y="4.6" width="4.6" height="4.2" rx="1" fill="none" stroke="#575552" stroke-width="0.95"/><rect x="4.1" y="6.4" width="4.4" height="4.3" rx="1" fill="#fafafa" stroke="#575552" stroke-width="0.95"/></svg>
<div class="t" style="left:968.6px;top:134.00px;font-size:13.5px;color:#2a2a2a;">Connection</div>
<div class="t" style="left:977.4px;top:165.00px;font-size:13.5px;color:#2a2a2a;">Type:</div>
<div style="left:1015.6px;top:160.4px;width:230px;height:22px;box-sizing:border-box;border:1px solid #c0bebc;border-radius:3px;background:linear-gradient(#fbfbfb,#e2e2e2);"></div>
<div style="left:1231.5px;top:163px;width:1px;height:16px;background:#a8a8a8;"></div>
<svg style="left:1019px;top:163px" width="18" height="15"><path d="M3 3L9 3L9 12.5L15 12.5" fill="none" stroke="#5d96e6" stroke-width="1.1"/><rect x="2" y="2" width="2" height="2" fill="#d40000"/><rect x="14" y="11.5" width="2" height="2" fill="#d40000"/></svg>
<div class="t" style="left:1039.5px;top:163.00px;font-size:14px;color:#2a2a2a;">Standard</div>
<div style="left:968px;top:200.5px;width:266px;height:1.5px;background:#222;"></div>
<div class="t" style="left:968px;top:205.00px;font-size:13.5px;color:#2a2a2a;">Line</div>
<div style="left:969px;top:222.7px;width:47.7px;height:19.3px;box-sizing:border-box;border:1px solid #c0bebc;border-radius:3px;background:linear-gradient(#fbfbfb,#e3e3e3);"></div>
<div style="left:970.5px;top:230.3px;width:29px;height:2px;background:#111;"></div>
<div style="left:999.5px;top:225.5px;width:1px;height:14px;background:#a8a8a8;"></div>
<svg style="left:1002px;top:228.8px" width="12" height="8"><path d="M1 1L5.2 5.6L9.4 1" fill="none" stroke="#7a7a7a" stroke-width="1.6"/></svg>
<div style="left:1025.5px;top:222.7px;width:176.3px;height:19.3px;box-sizing:border-box;border:1px solid #c0bebc;border-radius:3px;background:linear-gradient(#fbfbfb,#e3e3e3);"></div>
<div style="left:1027px;top:230.3px;width:157px;height:2px;background:#111;"></div>
<div style="left:1184.3px;top:225.5px;width:1px;height:14px;background:#a8a8a8;"></div>
<svg style="left:1187px;top:228.8px" width="12" height="8"><path d="M1 1L5.2 5.6L9.4 1" fill="none" stroke="#7a7a7a" stroke-width="1.6"/></svg>
<div style="left:1210.5px;top:222.7px;width:40px;height:19.3px;box-sizing:border-box;border:1px solid #c0bebc;border-radius:3px;background:linear-gradient(#fbfbfb,#e3e3e3);"></div>
<div style="left:1212px;top:230.3px;width:22px;height:2px;background:#111;"></div>
<div class="t" style="left:968px;top:258.00px;font-size:13.5px;color:#2a2a2a;">Thickness:</div>
<div style="left:1039.8px;top:252.5px;width:115.5px;height:25px;box-sizing:border-box;background:#f3f1f0;border-radius:3px;"></div>
<div style="left:1041.4px;top:253.5px;width:96.5px;height:23px;box-sizing:border-box;border:1px solid #b4b1ae;border-radius:3px;background:linear-gradient(#cac6c3,#d3cfcc 5px,#d4d0cd);"></div>
<div style="left:1137.8px;top:253px;width:16.5px;height:24px;box-sizing:border-box;background:#fff;border-right:1px solid #d8d8d8;border-top:1px solid #d8d8d8;border-bottom:1px solid #d8d8d8;"></div>
<div style="left:1150.5px;top:253px;width:4px;height:1.2px;background:#222;"></div>
<div style="left:1153.3px;top:253px;width:1.2px;height:4px;background:#222;"></div>
<svg style="left:1140.5px;top:255px" width="12" height="20"><path d="M1.3 6.3L5.4 2.3L9.5 6.3M1.3 13.7L5.4 17.7L9.5 13.7" fill="none" stroke="#7a7a7a" stroke-width="1.5"/></svg>
<div class="t" style="left:1089.6px;top:257.00px;font-size:14px;color:#2a2a2a;">0.01 in</div>
<div style="left:1162.8px;top:253.4px;width:30.7px;height:22.2px;box-sizing:border-box;border:1px solid #c0bebc;border-radius:3px;background:linear-gradient(#fbfbfb,#e3e3e3);"></div>
<div class="t" style="left:1168px;top:257.00px;font-size:13px;color:#2a2a2a;">...</div>
<svg style="left:1182.5px;top:262px" width="12" height="8"><path d="M1 1L5.2 5.6L9.4 1" fill="none" stroke="#7a7a7a" stroke-width="1.6"/></svg>
<div style="left:1202.6px;top:250.6px;width:40px;height:29.4px;box-sizing:border-box;border:1px solid #c0bebc;border-radius:3px;background:linear-gradient(#fbfbfb,#e3e3e3);"></div>
<svg style="left:1209px;top:254px" width="25" height="22"><rect x="3" y="14.8" width="16" height="4.3" fill="#000"/><path d="M4 4L13 13" stroke="#333" stroke-width="2.4"/><circle cx="8.5" cy="4.8" r="1" fill="#4a6ad8"/><circle cx="11.5" cy="4.5" r="1" fill="#5a4ad8"/><circle cx="14.5" cy="5.5" r="1" fill="#a040d0"/><circle cx="17" cy="7.8" r="1" fill="#d040a0"/><circle cx="18.5" cy="10.8" r="1" fill="#e04040"/><circle cx="4" cy="10" r="1" fill="#40c040"/><circle cx="4.5" cy="13" r="1" fill="#80d040"/></svg>
<div style="left:968px;top:289.5px;width:266px;height:1.5px;background:#222;"></div>
<div class="t" style="left:968px;top:294.00px;font-size:13.5px;color:#2a2a2a;">Connection Point</div>
<div style="left:981.2px;top:322.6px;width:12px;height:12px;box-sizing:border-box;border:1px solid #bdbab8;border-radius:3px;background:linear-gradient(#fff,#f0f0f0);"></div>
<div class="t" style="left:1001.5px;top:322.00px;font-size:13.5px;color:#2a2a2a;">Edit Mode</div>
<div class="t" style="left:977.4px;top:345.00px;font-size:13.5px;color:#2a2a2a;">Escape Direction</div>
<div style="left:979.4px;top:366.7px;width:29px;height:29px;box-sizing:border-box;border:1px solid #c7c5c3;border-radius:3px;background:#f4f4f3;"></div>
<svg style="left:981.9px;top:369.2px" width="24" height="24"><g fill="#8e8e8e"><rect x="10.3" y="10.3" width="3.4" height="3.4"/><path d="M12 2L15.3 5.6L12.8 5.6L12.8 8.5L11.2 8.5L11.2 5.6L8.7 5.6Z"/><path d="M12 22L15.3 18.4L12.8 18.4L12.8 15.5L11.2 15.5L11.2 18.4L8.7 18.4Z"/><path d="M2 12L5.6 8.7L5.6 11.2L8.5 11.2L8.5 12.8L5.6 12.8L5.6 15.3Z"/><path d="M22 12L18.4 8.7L18.4 11.2L15.5 11.2L15.5 12.8L18.4 12.8L18.4 15.3Z"/></g></svg>
<div style="left:1018.4px;top:366.7px;width:29px;height:29px;box-sizing:border-box;border:1px solid #c7c5c3;border-radius:3px;background:#f4f4f3;"></div>
<svg style="left:1020.9000000000001px;top:369.2px" width="24" height="24"><g fill="#8e8e8e"><rect x="10.3" y="10.3" width="3.4" height="3.4"/><path d="M2 12L5.6 8.7L5.6 11.2L8.5 11.2L8.5 12.8L5.6 12.8L5.6 15.3Z"/><path d="M22 12L18.4 8.7L18.4 11.2L15.5 11.2L15.5 12.8L18.4 12.8L18.4 15.3Z"/></g></svg>
<div style="left:1057.5px;top:366.7px;width:29px;height:29px;box-sizing:border-box;border:1px solid #c7c5c3;border-radius:3px;background:#f4f4f3;"></div>
<svg style="left:1060.0px;top:369.2px" width="24" height="24"><g fill="#8e8e8e"><rect x="10.3" y="10.3" width="3.4" height="3.4"/><path d="M12 2L15.3 5.6L12.8 5.6L12.8 8.5L11.2 8.5L11.2 5.6L8.7 5.6Z"/><path d="M12 22L15.3 18.4L12.8 18.4L12.8 15.5L11.2 15.5L11.2 18.4L8.7 18.4Z"/></g></svg>
<div style="left:1096.5px;top:366.7px;width:29px;height:29px;box-sizing:border-box;border:1px solid #c7c5c3;border-radius:3px;background:#f4f4f3;"></div>
<svg style="left:1099.0px;top:369.2px" width="24" height="24"><g fill="#8e8e8e"><rect x="10.3" y="10.3" width="3.4" height="3.4"/><path d="M2 12L5.6 8.7L5.6 11.2L8.5 11.2L8.5 12.8L5.6 12.8L5.6 15.3Z"/></g></svg>
<div style="left:1135.4px;top:366.7px;width:29px;height:29px;box-sizing:border-box;border:1px solid #c7c5c3;border-radius:3px;background:#f4f4f3;"></div>
<svg style="left:1137.9px;top:369.2px" width="24" height="24"><g fill="#8e8e8e"><rect x="10.3" y="10.3" width="3.4" height="3.4"/><path d="M22 12L18.4 8.7L18.4 11.2L15.5 11.2L15.5 12.8L18.4 12.8L18.4 15.3Z"/></g></svg>
<div style="left:1174.5px;top:366.7px;width:29px;height:29px;box-sizing:border-box;border:1px solid #c7c5c3;border-radius:3px;background:#f4f4f3;"></div>
<svg style="left:1177.0px;top:369.2px" width="24" height="24"><g fill="#8e8e8e"><rect x="10.3" y="10.3" width="3.4" height="3.4"/><path d="M12 2L15.3 5.6L12.8 5.6L12.8 8.5L11.2 8.5L11.2 5.6L8.7 5.6Z"/></g></svg>
<div style="left:1213.5px;top:366.7px;width:29px;height:29px;box-sizing:border-box;border:1px solid #c7c5c3;border-radius:3px;background:#f4f4f3;"></div>
<svg style="left:1216.0px;top:369.2px" width="24" height="24"><g fill="#8e8e8e"><rect x="10.3" y="10.3" width="3.4" height="3.4"/><path d="M12 22L15.3 18.4L12.8 18.4L12.8 15.5L11.2 15.5L11.2 18.4L8.7 18.4Z"/></g></svg>
<div class="t" style="left:977.4px;top:403.00px;font-size:13.5px;color:#2a2a2a;">Alignment</div>
<div style="left:978.6px;top:429.5px;width:24px;height:19px;box-sizing:border-box;border:1px solid #c7c5c3;border-radius:3px;background:#f4f4f3;"></div>
<div class="t" style="left:978.6px;top:434.00px;font-size:12px;color:#666;width:24px;text-align:center;">%</div>
<div style="left:1010.2px;top:423.4px;width:1.2px;height:31.4px;background:#222;"></div>
<div style="left:1133.8px;top:423.4px;width:1.2px;height:31.4px;background:#222;"></div>
<div style="left:1020.6px;top:424.5px;width:29px;height:29.2px;box-sizing:border-box;border:1px solid #c7c5c3;border-radius:3px;background:#f4f4f3;"></div>
<svg style="left:1020.6px;top:424.5px" width="29" height="29"><g fill="#f0f0f0" stroke="#c4c4c4" stroke-width="1"><rect x="6.5" y="6.5" width="15" height="7"/><rect x="6.5" y="15.5" width="19" height="7"/></g><rect x="4" y="4" width="1.4" height="21" fill="#9a9a9a"/></svg>
<div style="left:1058.5px;top:424.5px;width:29px;height:29.2px;box-sizing:border-box;border:1px solid #c7c5c3;border-radius:3px;background:#f4f4f3;"></div>
<svg style="left:1058.5px;top:424.5px" width="29" height="29"><g fill="#f0f0f0" stroke="#c4c4c4" stroke-width="1"><rect x="8.5" y="6.5" width="12" height="7"/><rect x="5.5" y="15.5" width="18" height="7"/></g><rect x="13.8" y="4" width="1.4" height="21" fill="#9a9a9a"/></svg>
<div style="left:1096.6px;top:424.5px;width:29px;height:29.2px;box-sizing:border-box;border:1px solid #c7c5c3;border-radius:3px;background:#f4f4f3;"></div>
<svg style="left:1096.6px;top:424.5px" width="29" height="29"><g fill="#f0f0f0" stroke="#c4c4c4" stroke-width="1"><rect x="7.5" y="6.5" width="15" height="7"/><rect x="3.5" y="15.5" width="19" height="7"/></g><rect x="23.5" y="4" width="1.4" height="21" fill="#9a9a9a"/></svg>
<div style="left:1143.2px;top:424.5px;width:29px;height:29.2px;box-sizing:border-box;border:1px solid #c7c5c3;border-radius:3px;background:#f4f4f3;"></div>
<svg style="left:1143.2px;top:424.5px" width="29" height="29"><g fill="#f0f0f0" stroke="#c4c4c4" stroke-width="1"><rect x="6.5" y="6.5" width="7" height="15"/><rect x="15.5" y="6.5" width="7" height="19"/></g><rect x="4" y="4" width="21" height="1.4" fill="#9a9a9a"/></svg>
<div style="left:1181.4px;top:424.5px;width:29px;height:29.2px;box-sizing:border-box;border:1px solid #c7c5c3;border-radius:3px;background:#f4f4f3;"></div>
<svg style="left:1181.4px;top:424.5px" width="29" height="29"><g fill="#f0f0f0" stroke="#c4c4c4" stroke-width="1"><rect x="6.5" y="7.5" width="7" height="14"/><rect x="15.5" y="5.5" width="7" height="18"/></g><rect x="4" y="13.8" width="21" height="1.4" fill="#9a9a9a"/></svg>
<div style="left:1219.4px;top:424.5px;width:29px;height:29.2px;box-sizing:border-box;border:1px solid #c7c5c3;border-radius:3px;background:#f4f4f3;"></div>
<svg style="left:1219.4px;top:424.5px" width="29" height="29"><g fill="#f0f0f0" stroke="#c4c4c4" stroke-width="1"><rect x="6.5" y="7.5" width="7" height="15"/><rect x="15.5" y="3.5" width="7" height="19"/></g><rect x="4" y="23.5" width="21" height="1.4" fill="#9a9a9a"/></svg>
<div style="left:958px;top:552px;width:275px;height:10px;background:#dddbd9;"></div>
<div style="left:974.5px;top:553.3px;width:213px;height:7.5px;border-radius:4px;background:#9d9b99;"></div>
<svg style="left:961px;top:553px" width="8" height="9"><path d="M5.5 1.5L2.5 4.5L5.5 7.5" fill="none" stroke="#9a9a9a" stroke-width="1.2"/></svg>
<svg style="left:1222px;top:553px" width="8" height="9"><path d="M2.5 1.5L5.5 4.5L2.5 7.5" fill="none" stroke="#9a9a9a" stroke-width="1.2"/></svg>
<div style="left:958px;top:563.5px;width:276px;height:6px;background-color:#e8e6e4;background-image:radial-gradient(circle,#fafaf9 0.7px,transparent 0.75px),radial-gradient(circle,#fafaf9 0.7px,transparent 0.75px);background-size:3px 3px;background-position:0 0,1px 1px;"></div>
<svg style="left:961px;top:572.8px" width="13" height="15"><rect x="0.5" y="0.5" width="12" height="14" rx="3" fill="#efedec" stroke="#c2bfbd"/><path d="M3.2 10.0L6.5 4.7L9.8 10.0Z" fill="#111"/></svg>
<div class="t" style="left:977.2px;top:573.00px;font-size:13.5px;color:#2a2a2a;">Shape Properties</div>
<svg style="left:1200px;top:572px" width="15" height="16" viewBox="0 0 15 16"><rect x="0.6" y="0.6" width="12.8" height="14.6" rx="3.5" fill="#ffffff" stroke="#bcc4bc" stroke-width="0.9"/><rect x="2.2" y="2.5" width="10.3" height="10.6" rx="1.3" fill="none" stroke="#575552" stroke-width="1.1"/><rect x="5.6" y="4.6" width="4.6" height="4.2" rx="1" fill="none" stroke="#575552" stroke-width="0.95"/><rect x="4.1" y="6.4" width="4.4" height="4.3" rx="1" fill="#fafafa" stroke="#575552" stroke-width="0.95"/></svg>
<svg style="left:1217px;top:572px" width="15" height="16" viewBox="0 0 15 16"><rect x="0.6" y="0.6" width="12.8" height="14.6" rx="3.5" fill="#ffffff" stroke="#bcc4bc" stroke-width="0.9"/><rect x="2.2" y="2.5" width="10.3" height="10.6" rx="1.3" fill="none" stroke="#575552" stroke-width="1.1"/><path d="M4.7 5.1L10 10.5M10 5.1L4.7 10.5" stroke="#575552" stroke-width="1.9"/></svg>
<div style="left:1155.5px;top:838.6px;width:75px;height:3.2px;box-sizing:border-box;border:1px solid #b9b7b5;border-radius:2px;background:#e6e4e2;"></div>
<svg style="left:1177px;top:830px" width="20" height="20"><circle cx="9.7" cy="10" r="7.6" fill="url(#sg)" stroke="#a9a7a5" stroke-width="1"/><defs><linearGradient id="sg" x1="0" y1="0" x2="0" y2="1"><stop offset="0" stop-color="#fefefe"/><stop offset="1" stop-color="#dedede"/></linearGradient></defs></svg>
<svg style="left:440px;top:330px" width="360" height="230" viewBox="440 330 360 230"><path d="M599.3 375.2L599.3 517.3L491.5 517.3L491.5 500" fill="none" stroke="#2a2a2a" stroke-width="1.2"/><path d="M637.5 375.2L671.5 375.2L671.5 516L705 516" fill="none" stroke="#6e6e6e" stroke-width="1.2"/><path d="M571 351.6L637.4 351.6L637.4 398.1L560.4 398.1L560.4 360.4Z" fill="none" stroke="#2a2a2a" stroke-width="1.4"/><circle cx="491" cy="499.8" r="23.8" fill="none" stroke="#2a2a2a" stroke-width="1.3"/><path d="M494 523.5L515 523.5" stroke="#555" stroke-width="1.3"/><path d="M714.6 491.8L778.5 491.8A35 35 0 0 0 778.5 540L714.6 540A35 35 0 0 1 714.6 491.8Z" fill="none" stroke="#2a2a2a" stroke-width="1.3"/><rect x="596" y="348.6" width="6" height="6" rx="1.3" fill="#fcfcfc" stroke="#6a6a6a" stroke-width="1.3"/><rect x="557.4" y="372.2" width="6" height="6" rx="1.3" fill="#fcfcfc" stroke="#6a6a6a" stroke-width="1.3"/><rect x="596" y="395.1" width="6" height="6" rx="1.3" fill="#fcfcfc" stroke="#6a6a6a" stroke-width="1.3"/><rect x="488" y="473" width="6" height="6" rx="1.3" fill="#fcfcfc" stroke="#6a6a6a" stroke-width="1.3"/><rect x="464" y="496.8" width="6" height="6" rx="1.3" fill="#fcfcfc" stroke="#6a6a6a" stroke-width="1.3"/><rect x="512" y="496.8" width="6" height="6" rx="1.3" fill="#fcfcfc" stroke="#6a6a6a" stroke-width="1.3"/><rect x="488" y="520.5" width="6" height="6" rx="1.3" fill="#fcfcfc" stroke="#6a6a6a" stroke-width="1.3"/><rect x="739" y="488.8" width="6" height="6" rx="1.3" fill="#fcfcfc" stroke="#6a6a6a" stroke-width="1.3"/><rect x="739" y="537" width="6" height="6" rx="1.3" fill="#fcfcfc" stroke="#6a6a6a" stroke-width="1.3"/><rect x="596.6" y="372.7" width="5.6" height="5.6" fill="#fff" stroke="#111" stroke-width="1.05"/><rect x="488.59999999999997" y="497.5" width="5.6" height="5.6" fill="#fff" stroke="#111" stroke-width="1.05"/><rect x="739.5" y="513.4000000000001" width="5.6" height="5.6" fill="#fff" stroke="#111" stroke-width="1.05"/><path d="M637.4 369.9L642.6999999999999 375.2L637.4 380.5L632.1 375.2Z" fill="#fff" stroke="#2a2aee" stroke-width="0.9"/><path d="M705 510.7L710.3 516L705 521.3L699.7 516Z" fill="#fff" stroke="#2a2aee" stroke-width="0.9"/></svg>
<svg style="left:0px;top:70px" width="830" height="34" viewBox="0 70 830 34"><defs><linearGradient id="pg" x1="0" y1="0" x2="1" y2="1"><stop offset="0" stop-color="#ffffff"/><stop offset="1" stop-color="#e4e4e4"/></linearGradient><linearGradient id="fold" x1="0" y1="0" x2="0" y2="1"><stop offset="0" stop-color="#7fb2e8"/><stop offset="1" stop-color="#4f83c6"/></linearGradient><linearGradient id="ug" x1="0" y1="0" x2="1" y2="1"><stop offset="0" stop-color="#fff27a"/><stop offset="0.6" stop-color="#f0c020"/><stop offset="1" stop-color="#f2e0b0"/></linearGradient><linearGradient id="rg" x1="1" y1="0" x2="0" y2="1"><stop offset="0" stop-color="#c8c8c8"/><stop offset="0.6" stop-color="#b4b4b4"/><stop offset="1" stop-color="#e6e6e6"/></linearGradient><linearGradient id="uo" gradientUnits="userSpaceOnUse" x1="266" y1="76" x2="266" y2="92"><stop offset="0" stop-color="#dcae10"/><stop offset="0.6" stop-color="#e0b020"/><stop offset="1" stop-color="#e8c860" stop-opacity="0.25"/></linearGradient><linearGradient id="ui" gradientUnits="userSpaceOnUse" x1="260" y1="76" x2="272" y2="92"><stop offset="0" stop-color="#fff080"/><stop offset="0.55" stop-color="#f2c828"/><stop offset="1" stop-color="#f6e6c0" stop-opacity="0.3"/></linearGradient><linearGradient id="ro" gradientUnits="userSpaceOnUse" x1="488" y1="76" x2="488" y2="92"><stop offset="0" stop-color="#a8a8a8"/><stop offset="0.6" stop-color="#b0b0b0"/><stop offset="1" stop-color="#d0d0d0" stop-opacity="0.25"/></linearGradient></defs><path d="M8.5 76.5L25 76.5L26.5 78L26.5 90L21 96.5L8.5 96.5Z" fill="url(#pg)" stroke="#a8a8a8" stroke-width="1"/><path d="M21 96.5L21.5 90.5L26.5 90Z" fill="#fff" stroke="#b0b0b0" stroke-width="0.8"/><circle cx="24.3" cy="80.8" r="6.2" fill="#19a51d" stroke="#0f8a12" stroke-width="0.8"/><path d="M24.3 77L24.3 84.6M20.5 80.8L28.1 80.8" stroke="#fff" stroke-width="2.4"/><path d="M86 79.5L106.5 79.5L106.5 88L86 88Z" fill="#4a78b8"/><path d="M87.5 75.5L100 75.5L105 80.5L105 87L87.5 87Z" fill="#f6f6f6" stroke="#a0a0a0" stroke-width="0.8"/><path d="M100 75.5L100 80.5L105 80.5" fill="#e0e0e0" stroke="#a0a0a0" stroke-width="0.8"/><rect x="85.3" y="86.6" width="21.6" height="10.1" rx="1.2" fill="url(#fold)" stroke="#3d6aa8" stroke-width="0.8"/><path d="M86 93L106.5 93" stroke="#4374b8" stroke-width="0.8"/><path d="M168.5 76.5L187.5 76.5L188 77L188 95.5L168.5 95.5Z" fill="#3b3b3b" stroke="#222" stroke-width="0.8"/><rect x="171" y="77" width="14.3" height="9.5" fill="#eef3f8"/><path d="M172.5 79.5L184 79.5M172.5 82L184 82M172.5 84.5L184 84.5" stroke="#8aa8c8" stroke-width="0.8"/><rect x="172.7" y="89.2" width="9.5" height="6.3" fill="#d8d8d8"/><rect x="174" y="90.5" width="2.6" height="4" fill="#333"/><path d="M260.8 82.5A6.8 6.8 0 1 1 270.1 91" fill="none" stroke="url(#uo)" stroke-width="6"/><path d="M260.8 82.5A6.8 6.8 0 1 1 270.1 91" fill="none" stroke="url(#ui)" stroke-width="4"/><path d="M256.5 76.5L256.5 86.5L266.5 86.5Z" fill="#f4d838" stroke="#d8a808" stroke-width="1.1" stroke-linejoin="round"/><path d="M493.2 82.5A6.8 6.8 0 1 0 483.9 91" fill="none" stroke="url(#ro)" stroke-width="6"/><path d="M493.2 82.5A6.8 6.8 0 1 0 483.9 91" fill="none" stroke="url(#rg)" stroke-width="4"/><path d="M497.5 76.5L497.5 86.5L487.5 86.5Z" fill="#c4c4c4" stroke="#a8a8a8" stroke-width="1.1" stroke-linejoin="round"/><path d="M573 75.5L582 90M584 75.5L575 90" stroke="#bbb" stroke-width="1.6"/><path d="M573 75.5L582 90M584 75.5L575 90" stroke="#fafafa" stroke-width="0.7"/><path d="M575.5 89.5L571 93.5M581.5 89.5L586 93.5" stroke="#555" stroke-width="2.2"/><ellipse cx="571" cy="94" rx="2.6" ry="2" fill="#fff" stroke="#555" stroke-width="1.3" transform="rotate(-35 571 94)"/><ellipse cx="586" cy="94" rx="2.6" ry="2" fill="#fff" stroke="#555" stroke-width="1.3" transform="rotate(35 586 94)"/><path d="M636.5 75.5L650.5 75.5L651 76L651 92.5L636.5 92.5Z" fill="#f2f2f2" stroke="#c4c4c4" stroke-width="0.9"/><path d="M640.5 79.5L655.5 79.5L655.5 92L651.5 96L640.5 96Z" fill="#f7f7f7" stroke="#c4c4c4" stroke-width="0.9"/><path d="M651.5 96L651.5 92L655.5 92" fill="#fff" stroke="#c4c4c4" stroke-width="0.8"/><path d="M714 77L724 77L724 95.5L714 95.5Z" fill="#e6e6e6" stroke="#6a6a6a" stroke-width="1.1"/><rect x="717.5" y="75.3" width="4.8" height="2.5" fill="#f0f0f0" stroke="#aaa" stroke-width="0.7"/><path d="M723 81.5L735.5 81.5L735.5 92L731.5 96L723 96Z" fill="#f3f3f3" stroke="#c0c0c0" stroke-width="0.9"/><path d="M731.5 96L731.5 92L735.5 92" fill="#fff" stroke="#c0c0c0" stroke-width="0.8"/><path d="M801 79L815 93M815 79L801 93" stroke="#9a9a9a" stroke-width="5.4" stroke-linecap="square"/><path d="M801 79L815 93M815 79L801 93" stroke="#b8b8b8" stroke-width="2.4" stroke-linecap="square"/></svg>
<div style="left:0px;top:0px;width:1234px;height:860px;border:1px solid #a2a3a3;border-radius:4px 4px 0 0;box-sizing:border-box;"></div>
</body></html>
